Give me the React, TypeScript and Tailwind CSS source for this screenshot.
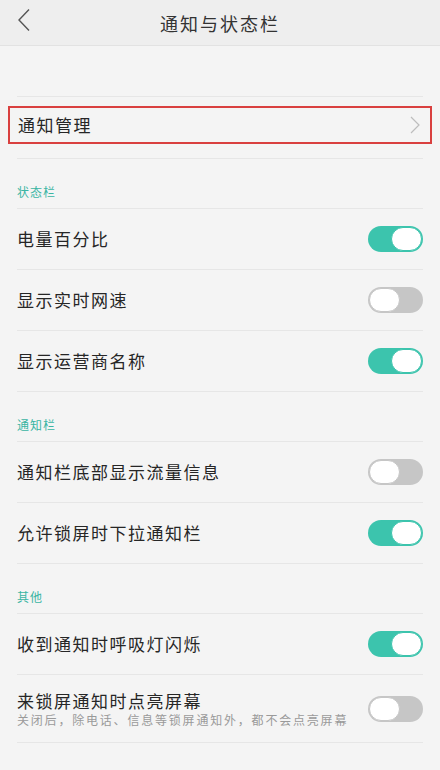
type Row = { label: string; on: boolean; sub?: string };

const sections: { title: string; rows: Row[] }[] = [
  {
    title: "状态栏",
    rows: [
      { label: "电量百分比", on: true },
      { label: "显示实时网速", on: false },
      { label: "显示运营商名称", on: true },
    ],
  },
  {
    title: "通知栏",
    rows: [
      { label: "通知栏底部显示流量信息", on: false },
      { label: "允许锁屏时下拉通知栏", on: true },
    ],
  },
  {
    title: "其他",
    rows: [
      { label: "收到通知时呼吸灯闪烁", on: true },
      {
        label: "来锁屏通知时点亮屏幕",
        on: false,
        sub: "关闭后，除电话、信息等锁屏通知外，都不会点亮屏幕",
      },
    ],
  },
];

function Toggle({ on }: { on: boolean }) {
  return (
    <div
      className={
        "flex h-[26px] w-[55px] shrink-0 items-center rounded-full px-[1px] " +
        (on ? "justify-end bg-[#3cc4ad]" : "justify-start bg-[#c6c6c6]")
      }
    >
      <div
        className={
          "h-[24px] w-[31px] rounded-full bg-white " +
          (on ? "border border-[#3cc4ad]" : "border border-[#c6c6c6]")
        }
      />
    </div>
  );
}

export default function App() {
  return (
    <div
      className="h-[770px] w-[440px] overflow-hidden bg-[#f4f4f4] text-[#262626]"
      style={{ fontFamily: '"Noto Sans CJK SC", "Noto Sans", sans-serif' }}
    >
      <header className="relative flex h-[46px] items-center justify-center border-b border-[#e2e2e2] bg-[#eeeeee]">
        <svg className="absolute left-[16px] top-[8px]" width="16" height="24" viewBox="0 0 16 24" fill="none">
          <path d="M13 1.5 L3 12 L13 22.5" stroke="#555" strokeWidth="1.4" />
        </svg>
        <h1 className="text-[18px] leading-none tracking-[2px] text-[#333]">通知与状态栏</h1>
      </header>

      <div className="px-[17px]">
        <div className="h-[51px] border-b border-[#e6e6e6]" />
        <div className="-mx-[9px] mt-[9px] flex h-[38px] items-center justify-between border-2 border-[#d9403f] pl-[8px] pr-[9px]">
          <span className="text-[17px] tracking-[1.5px]">通知管理</span>
          <svg width="12" height="18" viewBox="0 0 12 18" fill="none">
            <path d="M2 1 L10 9 L2 17" stroke="#bdbdbd" strokeWidth="1.2" />
          </svg>
        </div>
        <div className="mt-[14px] border-b border-[#e6e6e6]" />

        {sections.map((s) => (
          <div key={s.title}>
            <div className="flex h-[50px] items-end border-b border-[#e6e6e6] pb-[7px] text-[12px] tracking-[1px] text-[#3ab5a3]">
              {s.title}
            </div>
            {s.rows.map((r) => (
              <div
                key={r.label}
                className={
                  "flex items-center justify-between border-b border-[#e6e6e6] " +
                  (r.sub ? "h-[68px]" : "h-[61px]")
                }
              >
                <div className="flex flex-col">
                  <span className="text-[17px] leading-[22px] tracking-[1.5px]">{r.label}</span>
                  {r.sub && (
                    <span className="text-[12px] leading-[16px] tracking-[1.8px] text-[#9a9a9a]">{r.sub}</span>
                  )}
                </div>
                <Toggle on={r.on} />
              </div>
            ))}
          </div>
        ))}
      </div>
    </div>
  );
}
